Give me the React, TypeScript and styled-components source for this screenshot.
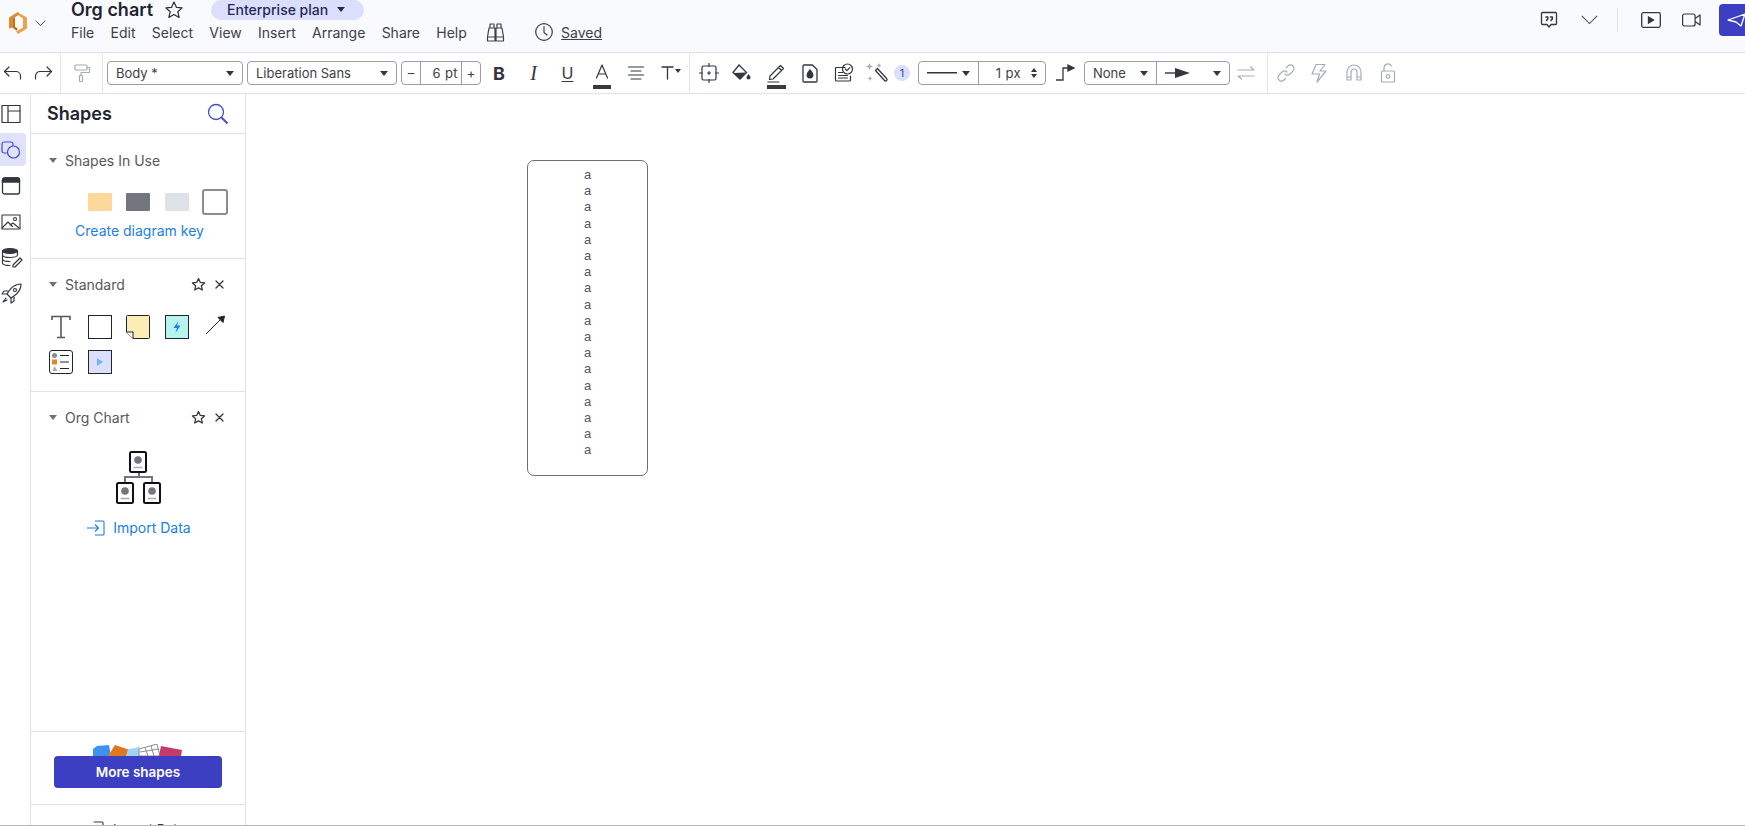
import React from "react";
import styled, { createGlobalStyle } from "styled-components";

const GlobalStyle = createGlobalStyle`
  html, body {
    margin: 0;
    padding: 0;
    background: #fff;
    font-family: Inter, "Noto Sans", sans-serif;
    color: #282c33;
  }
  * { box-sizing: border-box; }
`;

const Page = styled.div`
  width: 1745px;
  height: 826px;
  overflow: hidden;
  display: flex;
  flex-direction: column;
  border-bottom: 1px solid #b9b9b9;
`;

/* ---- top bar ---- */
const Header = styled.header`
  height: 53px;
  flex: none;
  display: flex;
  background: #f9fafd;
  border-bottom: 1px solid #dfe1ea;
`;

const LogoArea = styled.div`
  width: 71px;
  flex: none;
  display: flex;
  align-items: center;
  padding: 0 0 6px 9px;
  gap: 8px;
`;

const TitleColumn = styled.div`
  display: flex;
  flex-direction: column;
`;

const TitleRow = styled.div`
  height: 20px;
  display: flex;
  align-items: center;
`;

const Title = styled.h1`
  margin: 0;
  font-size: 18px;
  line-height: 20px;
  font-weight: 600;
  color: #1e2430;
`;

const StarButton = styled.span`
  display: flex;
  margin: 0 27px 0 11px;
`;

const PlanPill = styled.div`
  width: 153px;
  height: 20px;
  border-radius: 10px;
  margin-top: -1px;
  background: #dcdffb;
  color: #1f2a5c;
  font-size: 14px;
  font-weight: 500;
  display: flex;
  align-items: center;
  padding-left: 16px;
  gap: 9px;
`;

const Caret = styled.i<{ $size?: number; $color?: string }>`
  display: inline-block;
  flex: none;
  width: 0;
  height: 0;
  border-left: ${(p) => p.$size ?? 4}px solid transparent;
  border-right: ${(p) => p.$size ?? 4}px solid transparent;
  border-top: ${(p) => (p.$size ?? 4) + 1}px solid ${(p) => p.$color ?? "#33363d"};
`;

const MenuRow = styled.nav`
  display: flex;
  align-items: center;
  height: 24px;
  font-size: 14px;
  color: #3c4048;
`;

const MenuItem = styled.span`
  margin-right: 16.3px;
`;

const SavedWrap = styled.div`
  display: flex;
  align-items: center;
  gap: 7px;
  margin-left: 28px;
  font-size: 14px;
`;

const Saved = styled.span`
  text-decoration: underline;
  color: #3c4048;
`;

const BinocularWrap = styled.span`
  display: flex;
  margin-left: 2px;
`;

const HeaderRight = styled.div`
  margin-left: auto;
  display: flex;
  align-items: center;
  height: 40px;
  color: #33363d;
`;

const HeaderIcon = styled.span<{ $w: number }>`
  width: ${(p) => p.$w}px;
  display: flex;
  justify-content: center;
`;

const HeaderDivider = styled.span`
  width: 1px;
  height: 24px;
  background: #dfe1ea;
  margin: 0 18px 0 6px;
`;

const ShareButton = styled.button`
  width: 26px;
  height: 32px;
  margin-left: 3px;
  border: none;
  padding: 0 0 0 8px;
  display: flex;
  align-items: center;
  border-radius: 4px 0 0 4px;
  background: #3d3fc2;
  color: #fff;
  overflow: hidden;
`;

/* ---- toolbar ---- */
const Toolbar = styled.div`
  height: 41px;
  flex: none;
  display: flex;
  align-items: center;
  background: #fff;
  border-bottom: 1px solid #dfe1ea;
  color: #33363d;
`;

const ToolDivider = styled.span<{ $l?: number; $r?: number }>`
  width: 1px;
  height: 40px;
  flex: none;
  background: #e4e6ee;
  margin: 0 ${(p) => p.$r ?? 0}px 0 ${(p) => p.$l ?? 0}px;
`;

const Tool = styled.span<{ $w?: number; $muted?: boolean }>`
  width: ${(p) => p.$w ?? 34}px;
  height: 40px;
  flex: none;
  display: flex;
  align-items: center;
  justify-content: center;
  color: ${(p) => (p.$muted ? "#a9acb5" : "#33363d")};
`;

const ColorTool = styled(Tool)`
  position: relative;
`;

const ColorBar = styled.i`
  position: absolute;
  left: 8px;
  right: 8px;
  bottom: 4px;
  height: 4px;
  background: #3a3a3a;
`;

const Select = styled.div<{ $w: number; $ml?: number }>`
  width: ${(p) => p.$w}px;
  height: 24px;
  flex: none;
  margin-left: ${(p) => p.$ml ?? 0}px;
  border: 1px solid #9a9da6;
  border-radius: 4px;
  display: flex;
  align-items: center;
  font-size: 13px;
  color: #3c4048;
`;

const SelectPart = styled.div<{ $w?: number; $divided?: boolean }>`
  ${(p) => (p.$w ? `width: ${p.$w}px; flex: none;` : "flex: 1;")}
  height: 100%;
  display: flex;
  align-items: center;
  justify-content: space-between;
  padding: 0 8px;
  ${(p) => (p.$divided ? "border-left: 1px solid #9a9da6;" : "")}
`;

const SizeStep = styled.div<{ $divided?: boolean }>`
  width: 19px;
  flex: none;
  height: 100%;
  display: flex;
  align-items: center;
  justify-content: center;
  font-size: 13px;
  ${(p) => (p.$divided ? "border-left: 1px solid #9a9da6;" : "border-right: 1px solid #9a9da6;")}
`;

const SizeValue = styled.div<{ $pr?: number }>`
  flex: 1;
  text-align: right;
  padding-right: ${(p) => p.$pr ?? 3}px;
  letter-spacing: 0.4px;
`;

const BoldGlyph = styled.span`
  font-weight: 700;
  font-size: 18px;
`;

const ItalicGlyph = styled.span`
  font-family: "Liberation Serif", serif;
  font-style: italic;
  font-size: 20px;
`;

const UnderGlyph = styled.span`
  font-size: 16px;
  text-decoration: underline;
  text-decoration-thickness: 1px;
  text-underline-offset: 2px;
`;

const TextSizeCaret = styled(Caret)`
  margin: -4px 0 0 -4px;
`;

const Badge = styled.span`
  width: 16px;
  height: 16px;
  flex: none;
  margin: 0 8px 0 1px;
  border-radius: 50%;
  background: #dcdffb;
  color: #3d3fc2;
  font-size: 11px;
  display: flex;
  align-items: center;
  justify-content: center;
`;

const Spin = styled.span`
  display: flex;
  flex-direction: column;
  gap: 2px;
`;

const CaretUp = styled(Caret)`
  transform: rotate(180deg);
`;

/* ---- body ---- */
const Body = styled.div`
  flex: 1;
  min-height: 0;
  display: flex;
`;

const Rail = styled.aside`
  width: 31px;
  flex: none;
  border-right: 1px solid #dfe1ea;
  display: flex;
  flex-direction: column;
  padding-top: 3px;
  color: #33363d;
`;

const RailItem = styled.div<{ $active?: boolean }>`
  width: 26px;
  height: 33px;
  margin-bottom: 3px;
  border-radius: 0 4px 4px 0;
  display: flex;
  align-items: center;
  padding-left: 1px;
  background: ${(p) => (p.$active ? "#e0e2fb" : "transparent")};
  color: ${(p) => (p.$active ? "#3d50c8" : "#33363d")};
`;

const Panel = styled.aside`
  width: 215px;
  flex: none;
  border-right: 1px solid #dfe1ea;
  display: flex;
  flex-direction: column;
  overflow: hidden;
`;

const PanelHead = styled.div`
  height: 40px;
  flex: none;
  border-bottom: 1px solid #dfe1ea;
  display: flex;
  align-items: center;
  justify-content: space-between;
  padding: 0 16px;
  font-size: 18px;
  font-weight: 600;
  color: #1e2430;
`;

const Section = styled.section<{ $h?: number; $pt?: number }>`
  ${(p) => (p.$h ? `height: ${p.$h}px; flex: none;` : "flex: 1;")}
  border-bottom: 1px solid #dfe1ea;
  padding: ${(p) => p.$pt ?? 16}px 20px 0 18px;
`;

const SectionTitle = styled.div`
  height: 18px;
  display: flex;
  align-items: center;
  font-size: 14px;
  color: #55585f;
`;

const SectionName = styled.span`
  margin-left: 8px;
  flex: 1;
`;

const SectionActions = styled.span`
  display: flex;
  align-items: center;
  gap: 8px;
  color: #33363d;
`;

const Swatches = styled.div`
  display: flex;
  align-items: center;
  margin: 20px 0 0 39px;
  height: 26px;
`;

const Swatch = styled.i<{ $color: string; $gap: number }>`
  width: 24px;
  height: 18px;
  flex: none;
  margin-right: ${(p) => p.$gap}px;
  background: ${(p) => p.$color};
  border-radius: 1px;
`;

const SwatchOutline = styled.i`
  width: 26px;
  height: 26px;
  flex: none;
  border: 2px solid #8a8d96;
  border-radius: 3px;
`;

const BlueLink = styled.div`
  font-size: 14px;
  color: #1b7fe3;
  display: flex;
  align-items: center;
  justify-content: center;
`;

const KeyLink = styled(BlueLink)`
  margin: 7px 0 0 5px;
`;

const ShapeGrid = styled.div`
  display: grid;
  grid-template-columns: repeat(5, 38.5px);
  grid-auto-rows: 35px;
  margin: 22px 0 0 -7px;
`;

const ShapeCell = styled.div`
  display: flex;
  align-items: flex-start;
  justify-content: center;
`;

const OrgIcon = styled.div`
  display: flex;
  justify-content: center;
  margin: 25px 0 0 3px;
`;

const ImportLink = styled(BlueLink)`
  gap: 8px;
  margin: 14px 0 0 4px;
`;

const MoreSection = styled.section`
  height: 73px;
  flex: none;
  border-bottom: 1px solid #dfe1ea;
  display: flex;
  flex-direction: column;
  align-items: center;
  padding-top: 12px;
`;

const MoreButton = styled.button`
  width: 168px;
  height: 32px;
  flex: none;
  border: none;
  border-radius: 4px;
  background: #3d3fc2;
  color: #fff;
  font: 600 13.5px Inter, sans-serif;
`;

const PanelFoot = styled.div`
  height: 20px;
  flex: none;
  padding-top: 16px;
  display: flex;
  justify-content: center;
  gap: 8px;
  font-size: 13px;
  color: #33363d;
`;

const Canvas = styled.main`
  flex: 1;
  position: relative;
  background: #fff;
`;

const Node = styled.div`
  position: absolute;
  left: 281px;
  top: 66px;
  width: 121px;
  height: 316px;
  border: 1px solid #6b6e75;
  border-radius: 7px;
  padding-top: 6px;
  text-align: center;
  font-family: "Liberation Sans", Arial, sans-serif;
  font-size: 13px;
  line-height: 16.2px;
  color: #55585f;
`;

/* ---- icons ---- */
const Ico = ({ s = 20, w, h, sw = 1.4, children }: { s?: number; w?: number; h?: number; sw?: number; children: React.ReactNode }) => (
  <svg
    width={w ?? s}
    height={h ?? s}
    viewBox={`0 0 ${w ?? s} ${h ?? s}`}
    fill="none"
    stroke="currentColor"
    strokeWidth={sw}
    strokeLinecap="round"
    strokeLinejoin="round"
  >
    {children}
  </svg>
);

const Star = ({ s = 20 }: { s?: number }) => (
  <svg width={s} height={s} viewBox="0 0 20 20" fill="none" stroke="currentColor" strokeWidth={s > 16 ? 1.2 : 1.7} strokeLinejoin="round">
    <path d="M10 2l2.400 5.300 5.700.6-4.300 3.800 1.300 5.700L10 14.500l-5.100 2.900 1.300-5.700L1.900 7.900l5.700-.6z" />
  </svg>
);

const Close = () => (
  <Ico s={11} sw={1.3}>
    <path d="M2 2l7 7M9 2l-7 7" />
  </Ico>
);

const Logo = () => (
  <svg width="18" height="22" viewBox="0 0 18 22">
    <path d="M0 5.500L9 0l2 2-7 4.500v9L0 16.500z" fill="#e08a2e" />
    <path d="M18 5.500L11 1.500 9.500 3.500 14 6.500v9L7 19.500 9 22l9-5.500z" fill="#f0a04a" />
    <path d="M4 6.500l2-1.200v9.500l3 2-1.500 2L4 16z" fill="#c96f1a" />
  </svg>
);

const Chevron = ({ w = 11 }: { w?: number }) => (
  <svg width={w} height={w * 0.55} viewBox="0 0 20 11" fill="none" stroke="#4a4d55" strokeWidth={w > 14 ? 1.2 : 1.8}>
    <path d="M1 1l9 9 9-9" />
  </svg>
);

export default function App() {
  const lines = Array.from({ length: 18 }, (_, i) => i);
  const menu = ["File", "Edit", "Select", "View", "Insert", "Arrange", "Share", "Help"];

  return (
    <Page>
      <GlobalStyle />
      <Header>
        <LogoArea>
          <Logo />
          <Chevron />
        </LogoArea>
        <TitleColumn>
          <TitleRow>
            <Title>Org chart</Title>
            <StarButton>
              <Star />
            </StarButton>
            <PlanPill>
              Enterprise plan <Caret $color="#1f2a5c" />
            </PlanPill>
          </TitleRow>
          <MenuRow>
            {menu.map((m) => (
              <MenuItem key={m}>{m}</MenuItem>
            ))}
            <BinocularWrap>
              <Ico s={21} sw={1.2}>
                <path d="M5 2h4v4H5zM12 2h4v4h-4zM4 6h6v9H2.500zM11 6h6l1.500 9H11zM10 8.500h1M2.500 15v4h7.500v-4M11 15v4h7.500v-4" />
              </Ico>
            </BinocularWrap>
            <SavedWrap>
              <Ico s={20} sw={1.2}>
                <circle cx="10" cy="10" r="8.300" />
                <path d="M10 4.500V10.500l3 2.500" />
              </Ico>
              <Saved>Saved</Saved>
            </SavedWrap>
          </MenuRow>
        </TitleColumn>
        <HeaderRight>
          <HeaderIcon $w={36}>
            <Ico w={18} h={18} sw={1.3}>
              <path d="M2.500 1.500h13a1 1 0 011 1v10a1 1 0 01-1 1h-4.500L9 16l-2-2.500H2.500a1 1 0 01-1-1v-10a1 1 0 011-1z" />
              <path d="M6 6h1.800v2L6.500 9.500M10.500 6h1.800v2L11 9.500" strokeWidth="1.500" />
            </Ico>
          </HeaderIcon>
          <HeaderIcon $w={44}>
            <Chevron w={17} />
          </HeaderIcon>
          <HeaderDivider />
          <HeaderIcon $w={30}>
            <svg width="20" height="16" viewBox="0 0 20 16" fill="none" stroke="currentColor" strokeWidth="1.300">
              <rect x="0.700" y="0.700" width="18.600" height="14.600" rx="1.500" />
              <path d="M7.500 5l5 3-5 3z" fill="currentColor" />
            </svg>
          </HeaderIcon>
          <HeaderIcon $w={50}>
            <svg width="19" height="14" viewBox="0 0 19 14" fill="none" stroke="currentColor" strokeWidth="1.200" strokeLinejoin="round">
              <rect x="0.600" y="1" width="12.500" height="12" rx="2" />
              <path d="M13.100 5.500l5-3.500v10l-5-3.500" />
            </svg>
          </HeaderIcon>
          <ShareButton>
            <svg width="18" height="14" viewBox="0 0 18 14" fill="none" stroke="currentColor" strokeWidth="1.300" strokeLinejoin="round">
              <path d="M1 7l17-6-4 12-5-4z" />
            </svg>
          </ShareButton>
        </HeaderRight>
      </Header>

      <Toolbar>
        <Tool $w={26}>
          <Ico s={20} sw={1.2}>
            <path d="M6 4L1.500 8.500 6 13M1.500 8.500H13a4.500 4.500 0 014.500 4.500v3" />
          </Ico>
        </Tool>
        <Tool $w={34}>
          <Ico s={20} sw={1.2}>
            <path d="M14 4l4.500 4.500L14 13M18.500 8.500H7A4.500 4.500 0 002.500 13v3" />
          </Ico>
        </Tool>
        <ToolDivider />
        <Tool $w={41} $muted>
          <Ico s={20} sw={1.2}>
            <rect x="3" y="2" width="12" height="5" rx="1" />
            <path d="M15 4.500h2.500v5H9v3" />
            <rect x="7.500" y="12.500" width="3" height="6" rx="0.500" />
          </Ico>
        </Tool>
        <ToolDivider $r={4} />
        <Select $w={136}>
          <SelectPart>
            Body * <Caret $size={4.500} />
          </SelectPart>
        </Select>
        <Select $w={150} $ml={4}>
          <SelectPart>
            Liberation Sans <Caret $size={4.500} />
          </SelectPart>
        </Select>
        <Select $w={80} $ml={4}>
          <SizeStep>–</SizeStep>
          <SizeValue>6 pt</SizeValue>
          <SizeStep $divided>+</SizeStep>
        </Select>
        <Tool $w={36}>
          <BoldGlyph>B</BoldGlyph>
        </Tool>
        <Tool $w={33}>
          <ItalicGlyph>I</ItalicGlyph>
        </Tool>
        <Tool $w={35}>
          <UnderGlyph>U</UnderGlyph>
        </Tool>
        <ColorTool $w={34}>
          <Ico s={20} sw={1.2}>
            <path d="M4.500 15L10 2l5.500 13M6.200 11h7.600" />
          </Ico>
          <ColorBar />
        </ColorTool>
        <Tool $w={34}>
          <Ico s={18} sw={1.2}>
            <path d="M1.500 3h15M4 7h10M1.500 11h15M4 15h10" />
          </Ico>
        </Tool>
        <Tool $w={33}>
          <Ico s={20} sw={1.300}>
            <path d="M3 4h11M8.500 4v12" />
          </Ico>
          <TextSizeCaret $size={3} />
        </Tool>
        <ToolDivider $l={3} $r={2} />
        <Tool $w={33}>
          <Ico s={20} sw={1.200}>
            <rect x="3" y="3" width="14" height="14" rx="1.500" />
            <path d="M10 0.500v3M10 16.500v3M0.500 10h3M16.500 10h3M8.500 10h3M10 8.500v3" />
          </Ico>
        </Tool>
        <Tool $w={34}>
          <svg width="20" height="20" viewBox="0 0 20 20">
            <path d="M7 2l7.500 7.500-6.500 6.500L1 9.500z" fill="none" stroke="currentColor" strokeWidth="1.300" />
            <path d="M1.500 10l12.500-.5-6 6.500z" fill="currentColor" />
            <path d="M16.500 11c1 1.500 2 2.500 2 3.600a2 2 0 01-4 0c0-1.100 1-2.100 2-3.600z" fill="currentColor" />
          </svg>
        </Tool>
        <ColorTool $w={35}>
          <Ico s={20} sw={1.200}>
            <path d="M3 13L13.500 2.500l3 3L6 16l-3.500.5zM11.500 4.500l3 3M1 19h11" />
          </Ico>
          <ColorBar />
        </ColorTool>
        <Tool $w={32}>
          <svg width="16" height="19" viewBox="0 0 16 19" fill="none" stroke="currentColor" strokeWidth="1.300" strokeLinejoin="round">
            <path d="M2 1h8.500L15 5.500V17a1 1 0 01-1 1H2a1 1 0 01-1-1V2a1 1 0 011-1z" />
            <path d="M8 6c1.500 2 2.800 3.300 2.800 5a2.800 2.800 0 01-5.600 0C5.200 9.300 6.500 8 8 6z" fill="currentColor" />
          </svg>
        </Tool>
        <Tool $w={35}>
          <Ico s={20} sw={1.200}>
            <path d="M11 4.500H2.500a1 1 0 00-1 1V17a1 1 0 001 1h13a1 1 0 001-1v-4" />
            <circle cx="13.500" cy="6" r="5" />
            <path d="M11.300 6l1.700 1.700 2.800-3M4.500 9.500h4M4.500 12.500h9M4.500 15h9" />
          </Ico>
        </Tool>
        <Tool $w={32}>
          <svg width="22" height="22" viewBox="0 0 22 22" fill="none">
            <path d="M9.500 8.500l2-2 9 10a1.400 1.400 0 01-2 2z" stroke="currentColor" strokeWidth="1.300" />
            <path d="M3.500 1l1 2.500 2.500 1-2.500 1-1 2.500-1-2.500L0 4.500l2.500-1zM13 1l.8 1.700 1.700.8-1.700.8L13 6l-.8-1.700-1.700-.8 1.700-.8zM4 14l.8 1.700 1.700.8-1.700.8L4 19l-.8-1.700-1.700-.8 1.700-.8z" fill="#a9acb5" />
          </svg>
        </Tool>
        <Badge>1</Badge>
        <Select $w={128}>
          <SelectPart $w={59}>
            <svg width="30" height="2" viewBox="0 0 30 2">
              <rect width="30" height="1.500" fill="#33363d" />
            </svg>
            <Caret $size={4.500} />
          </SelectPart>
          <SelectPart $divided>
            <SizeValue $pr={10}>1 px</SizeValue>
            <Spin>
              <CaretUp $size={3} />
              <Caret $size={3} />
            </Spin>
          </SelectPart>
        </Select>
        <Tool $w={38}>
          <svg width="20" height="20" viewBox="0 0 20 20" fill="none" stroke="currentColor" strokeWidth="1.300">
            <path d="M1 17h7V5h5" />
            <path d="M13 2l6 3-6 3z" fill="currentColor" />
          </svg>
        </Tool>
        <Select $w={146}>
          <SelectPart $w={71}>
            None <Caret $size={4} />
          </SelectPart>
          <SelectPart $divided>
            <svg width="26" height="10" viewBox="0 0 26 10">
              <path d="M0 4.300h12V5.700H0z" fill="#33363d" />
              <path d="M10 0l15 5-15 5z" fill="#33363d" />
            </svg>
            <Caret $size={4} />
          </SelectPart>
        </Select>
        <Tool $w={32} $muted>
          <Ico s={20} sw={1.2}>
            <path d="M2 7h16l-3.500-3M18 13H2l3.500 3" />
          </Ico>
        </Tool>
        <ToolDivider $l={5} $r={1} />
        <Tool $w={33} $muted>
          <Ico s={20} sw={1.200}>
            <path d="M9 11a3.500 3.500 0 005 0l3-3a3.500 3.500 0 00-5-5l-1.500 1.500" />
            <path d="M11 9a3.500 3.500 0 00-5 0l-3 3a3.500 3.500 0 005 5l1.500-1.500" />
          </Ico>
        </Tool>
        <Tool $w={34} $muted>
          <Ico s={20} sw={1.200}>
            <path d="M7 1.500h9L11 8h6l-9 11 2.500-8H3z" />
          </Ico>
        </Tool>
        <Tool $w={35} $muted>
          <Ico s={20} sw={1.200}>
            <path d="M3 17V9a7 7 0 0114 0v8h-4V9a3 3 0 00-6 0v8zM3 14h4M13 14h4" />
          </Ico>
        </Tool>
        <Tool $w={33} $muted>
          <Ico s={20} sw={1.200}>
            <rect x="3.500" y="8" width="13" height="11" rx="1" />
            <path d="M6 8V5a4 4 0 017.500-2" />
            <circle cx="10" cy="13.500" r="1.800" />
          </Ico>
        </Tool>
      </Toolbar>

      <Body>
        <Rail>
          <RailItem>
            <Ico s={20} sw={1.200}>
              <rect x="1" y="1.500" width="18" height="17" />
              <path d="M7 1.500v17M7 7h12" />
            </Ico>
          </RailItem>
          <RailItem $active>
            <Ico s={20} sw={1.200}>
              <rect x="1" y="2" width="11" height="11" rx="2" />
              <circle cx="12.500" cy="12" r="6" fill="#e0e2fb" />
            </Ico>
          </RailItem>
          <RailItem>
            <svg width="20" height="20" viewBox="0 0 20 20" fill="none" stroke="currentColor" strokeWidth="1.300">
              <rect x="1.500" y="2" width="17" height="16" rx="2" />
              <path d="M1.500 4a2 2 0 012-2h13a2 2 0 012 2v2h-17z" fill="currentColor" />
            </svg>
          </RailItem>
          <RailItem>
            <Ico s={20} sw={1.100}>
              <rect x="1" y="3" width="18" height="14" />
              <circle cx="14" cy="7" r="1.500" />
              <path d="M1 16l6-6 4.500 4.500M9 13l3-2 6 5" />
            </Ico>
          </RailItem>
          <RailItem>
            <Ico w={24} h={22} sw={1.200}>
              <ellipse cx="9" cy="4" rx="7.500" ry="2.500" fill="currentColor" />
              <path d="M1.500 4v12c0 1.400 3.300 2.500 7.500 2.500M16.500 4v4M1.500 8c0 1.400 3.300 2.500 7.500 2.500s7.500-1.100 7.500-2.500M1.500 12c0 1.400 3.300 2.500 7.500 2.500" />
              <path d="M12 18l7-7 2 2-7 7h-2z" />
            </Ico>
          </RailItem>
          <RailItem>
            <Ico s={21} sw={1.200}>
              <path d="M20 1c-5 0-9 2.500-12 7l-2 3 4 4 3-2c4.500-3 7-7 7-12z" />
              <circle cx="14" cy="7" r="1.500" />
              <path d="M7 8H3l-2 3h5M13 14v4l-3 2v-5M5 15l-3 4 4-2" />
            </Ico>
          </RailItem>
        </Rail>

        <Panel>
          <PanelHead>
            Shapes
            <svg width="22" height="22" viewBox="0 0 22 22" fill="none" stroke="#3d50c8" strokeWidth="1.300">
              <circle cx="9" cy="9" r="7.500" />
              <path d="M14.500 14.500l6 6" strokeWidth="2" />
            </svg>
          </PanelHead>

          <Section $h={125} $pt={17}>
            <SectionTitle>
              <Caret $color="#6f727a" />
              <SectionName>Shapes In Use</SectionName>
            </SectionTitle>
            <Swatches>
              <Swatch $color="#fdd89b" $gap={14} />
              <Swatch $color="#73767e" $gap={15} />
              <Swatch $color="#dfe1e8" $gap={13} />
              <SwatchOutline />
            </Swatches>
            <KeyLink>Create diagram key</KeyLink>
          </Section>

          <Section $h={133}>
            <SectionTitle>
              <Caret $color="#6f727a" />
              <SectionName>Standard</SectionName>
              <SectionActions>
                <Star s={15} />
                <Close />
              </SectionActions>
            </SectionTitle>
            <ShapeGrid>
              <ShapeCell>
                <svg width="20" height="24" viewBox="0 0 20 24" fill="none" stroke="#55585f" strokeWidth="1.600">
                  <path d="M1 5V1.500h18V5M10 1.500v21M6 22.500h8" />
                </svg>
              </ShapeCell>
              <ShapeCell>
                <svg width="24" height="24" viewBox="0 0 24 24">
                  <rect x="0.500" y="0.500" width="23" height="23" fill="#fff" stroke="#1e2430" />
                </svg>
              </ShapeCell>
              <ShapeCell>
                <svg width="24" height="24" viewBox="0 0 24 24" stroke="#1e2430" strokeWidth="1">
                  <path d="M1.500 0.500h21a1 1 0 011 1v21a1 1 0 01-1 1H7L0.500 17V1.500a1 1 0 011-1z" fill="#fdecb4" />
                  <path d="M0.500 17H7v6.500" fill="#fff" />
                </svg>
              </ShapeCell>
              <ShapeCell>
                <svg width="24" height="24" viewBox="0 0 24 24">
                  <rect x="0.500" y="0.500" width="23" height="23" fill="#b9f3ee" stroke="#1e2430" />
                  <path d="M13.500 6l-5 7h3.500l-1.500 5 5-7.500h-3.500z" fill="#1b7fe3" />
                </svg>
              </ShapeCell>
              <ShapeCell>
                <svg width="20" height="20" viewBox="0 0 20 20" fill="none" stroke="#1e2430">
                  <path d="M1 19L16 4" />
                  <path d="M13 2.500l6.500-1.500-1.500 6.500z" fill="#1e2430" />
                </svg>
              </ShapeCell>
              <ShapeCell>
                <svg width="24" height="24" viewBox="0 0 24 24">
                  <rect x="0.500" y="0.500" width="23" height="23" rx="2.500" fill="#fff" stroke="#1e2430" />
                  <circle cx="5.500" cy="5.500" r="2.500" fill="#8a8d96" />
                  <rect x="3" y="9.500" width="5" height="5" fill="#e08a2e" />
                  <path d="M5.500 16l3 5h-5z" fill="#a9acb5" />
                  <path d="M11 5.500h9M11 12h9M11 18.500h9" stroke="#1e2430" />
                </svg>
              </ShapeCell>
              <ShapeCell>
                <svg width="24" height="24" viewBox="0 0 24 24">
                  <rect x="0.500" y="0.500" width="23" height="23" fill="#dcdffb" stroke="#1e2430" />
                  <path d="M9 8l6 4-6 4z" fill="#6fb5f5" />
                </svg>
              </ShapeCell>
            </ShapeGrid>
          </Section>

          <Section>
            <SectionTitle>
              <Caret $color="#6f727a" />
              <SectionName>Org Chart</SectionName>
              <SectionActions>
                <Star s={15} />
                <Close />
              </SectionActions>
            </SectionTitle>
            <OrgIcon>
              <svg width="46" height="54" viewBox="0 0 46 54" fill="none">
                <path d="M23 21v5M9 31v-5h27v5" stroke="#73767e" strokeWidth="2" />
                {[[14, 1], [1, 32], [28, 32]].map(([x, y]) => (
                  <g key={`${x}-${y}`}>
                    <rect x={x} y={y} width="16" height="20" rx="1.500" fill="#fff" stroke="#111" strokeWidth="2" />
                    <circle cx={x + 8} cy={y + 8} r="3.800" fill="#73767e" />
                    <path d={`M${x + 3.500} ${y + 15.500}h9`} stroke="#a9acb5" strokeWidth="1.500" />
                  </g>
                ))}
              </svg>
            </OrgIcon>
            <ImportLink>
              <svg width="18" height="16" viewBox="0 0 18 16" fill="none" stroke="currentColor" strokeWidth="1.100">
                <path d="M8 1h8a1 1 0 011 1v12a1 1 0 01-1 1H8M0 8h11M8 4.500L11.500 8 8 11.500" />
              </svg>
              Import Data
            </ImportLink>
          </Section>

          <MoreSection>
            <svg width="90" height="12" viewBox="0 0 90 12">
              <path d="M0 12V5l4-3 12-1 2 11z" fill="#3e92ee" />
              <path d="M15 12l7-11 18 6-2 5z" fill="#e0781f" />
              <path d="M33 12l2-7 8-1 3-2 1 5 3 5z" fill="#9fd4f5" />
              <path d="M46 12V5L64 0l3 12z" fill="#fff" stroke="#8a8d96" />
              <path d="M52 3.500l3 8.500M58 2l3 10M47 8l19-3" stroke="#8a8d96" fill="none" />
              <path d="M66 12l2-10 21 4-1 6z" fill="#c43a6c" />
            </svg>
            <MoreButton>More shapes</MoreButton>
          </MoreSection>

          <PanelFoot>
            <Ico s={14} sw={1.100}>
              <path d="M3 1h8a1 1 0 011 1v12" />
            </Ico>
            Import Data
          </PanelFoot>
        </Panel>

        <Canvas>
          <Node>
            {lines.map((i) => (
              <div key={i}>a</div>
            ))}
          </Node>
        </Canvas>
      </Body>
    </Page>
  );
}
